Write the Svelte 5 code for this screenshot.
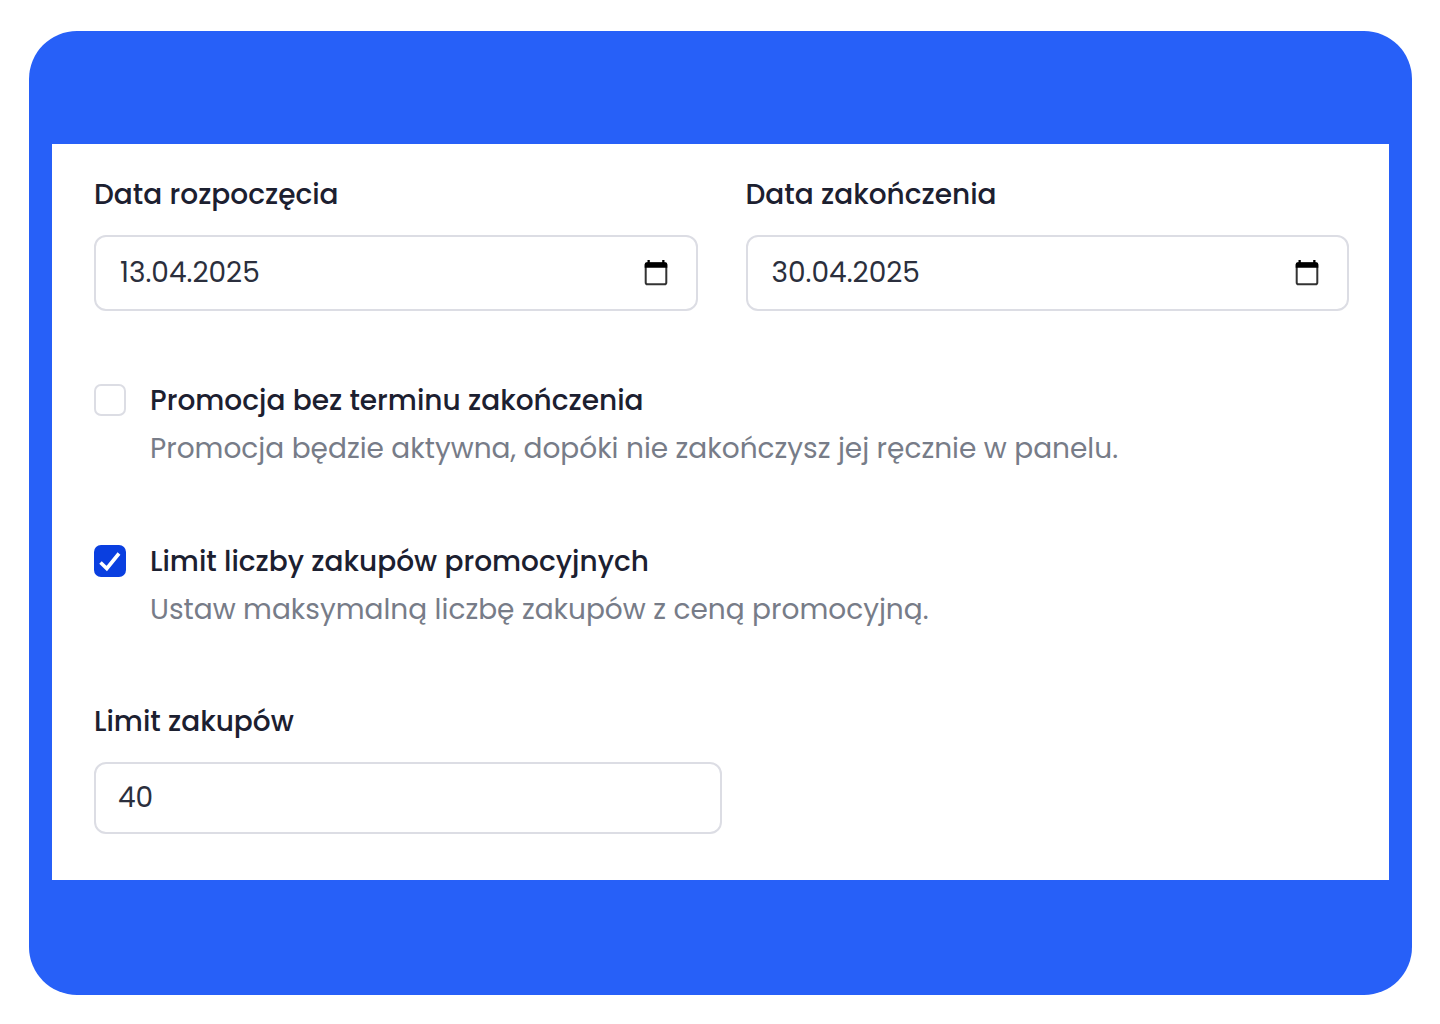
<script>
	let startDate = '13.04.2025';
	let endDate = '30.04.2025';
	let noEnd = false;
	let limited = true;
	let limit = '40';
</script>

<main>
	<form class="panel">
		<div class="dates">
			<div class="field">
				<label for="start">Data rozpoczęcia</label>
				<div class="box">
					<input id="start" type="text" bind:value={startDate}>
					<button type="button" aria-label="Wybierz datę rozpoczęcia">
						<svg viewBox="0 0 24 26">
							<rect x="1.700" y="3.600" width="20.600" height="20.600" rx="1.800" fill="none" stroke="#333" stroke-width="2"/>
							<path d="M.7 7.800V4.300Q.7 2.300 2.700 2.300H3.500V0H5.800V2.300H18.200V0H20.500V2.300H21.300Q23.300 2.300 23.300 4.300V7.800Z" fill="#000"/>
						</svg>
					</button>
				</div>
			</div>
			<div class="field">
				<label for="end">Data zakończenia</label>
				<div class="box">
					<input id="end" type="text" bind:value={endDate}>
					<button type="button" aria-label="Wybierz datę zakończenia">
						<svg viewBox="0 0 24 26">
							<rect x="1.700" y="3.600" width="20.600" height="20.600" rx="1.800" fill="none" stroke="#333" stroke-width="2"/>
							<path d="M.7 7.800V4.300Q.7 2.300 2.700 2.300H3.500V0H5.800V2.300H18.200V0H20.500V2.300H21.300Q23.300 2.300 23.300 4.300V7.800Z" fill="#000"/>
						</svg>
					</button>
				</div>
			</div>
		</div>

		<div class="option">
			<span class="check">
				<input id="noEnd" type="checkbox" bind:checked={noEnd} aria-describedby="noEndHint">
				<svg viewBox="0 0 32 32"><path d="M6.500 17.500L12.800 23.500L25 8.500"/></svg>
			</span>
			<div>
				<label for="noEnd">Promocja bez terminu zakończenia</label>
				<p id="noEndHint">Promocja będzie aktywna, dopóki nie zakończysz jej ręcznie w panelu.</p>
			</div>
		</div>

		<div class="option">
			<span class="check">
				<input id="limited" type="checkbox" bind:checked={limited} aria-describedby="limitedHint">
				<svg viewBox="0 0 32 32"><path d="M6.500 17.500L12.800 23.500L25 8.500"/></svg>
			</span>
			<div>
				<label for="limited">Limit liczby zakupów promocyjnych</label>
				<p id="limitedHint">Ustaw maksymalną liczbę zakupów z ceną promocyjną.</p>
			</div>
		</div>

		<div class="field limit">
			<label for="limit">Limit zakupów</label>
			<div class="box">
				<input id="limit" type="text" inputmode="numeric" bind:value={limit}>
			</div>
		</div>
	</form>
</main>

<style>
	:global(body) {
		background: #fff;
	}
	main {
		margin: 31px 28px 29px 29px;
		padding: 113px 23px 115px;
		border-radius: 48px;
		background: #2760f8;
		font-family: Poppins, Inter, sans-serif;
		font-size: 28px;
		color: #1c2030;
	}
	.panel {
		display: flex;
		flex-direction: column;
		gap: 65px;
		padding: 30px 40px 46px 42px;
		background: #fff;
	}
	.dates {
		display: grid;
		grid-template-columns: repeat(2, minmax(0, 1fr));
		gap: 48px;
		margin-bottom: 1px;
	}
	.field {
		display: flex;
		flex-direction: column;
		gap: 19px;
	}
	label {
		display: block;
		font-weight: 500;
		line-height: 42px;
	}
	.box {
		display: flex;
		align-items: center;
		box-sizing: border-box;
		height: 76px;
		padding: 0 28px 0 24px;
		border: 2px solid #dcdde4;
		border-radius: 12px;
	}
	.box input {
		flex: 1;
		min-width: 0;
		padding: 0;
		border: 0;
		outline: 0;
		background: none;
		font: inherit;
		color: #2b2f3d;
	}
	.box button {
		display: flex;
		padding: 0;
		border: 0;
		background: none;
		cursor: pointer;
	}
	.box svg {
		width: 24px;
		height: 26px;
	}
	.option {
		display: flex;
		align-items: flex-start;
		gap: 24px;
	}
	.option label, .option p {
		line-height: 48px;
	}
	.option p {
		margin: 0;
		color: #777c88;
	}
	.check {
		display: grid;
		flex: none;
		width: 32px;
		height: 32px;
		margin-top: 7px;
	}
	.check input, .check svg {
		grid-area: 1 / 1;
		width: 32px;
		height: 32px;
	}
	.check input {
		appearance: none;
		box-sizing: border-box;
		margin: 0;
		border: 2px solid #dcdde4;
		border-radius: 7px;
	}
	.check input:checked {
		border-color: #0a3fe0;
		background: #0a3fe0;
	}
	.check svg {
		visibility: hidden;
		pointer-events: none;
		fill: none;
		stroke: #fff;
		stroke-width: 3.6;
	}
	.check input:checked + svg {
		visibility: visible;
	}
	.limit {
		width: 50%;
		margin-top: 2px;
	}
	.limit .box {
		height: 72px;
		padding: 0 22px;
	}
</style>
